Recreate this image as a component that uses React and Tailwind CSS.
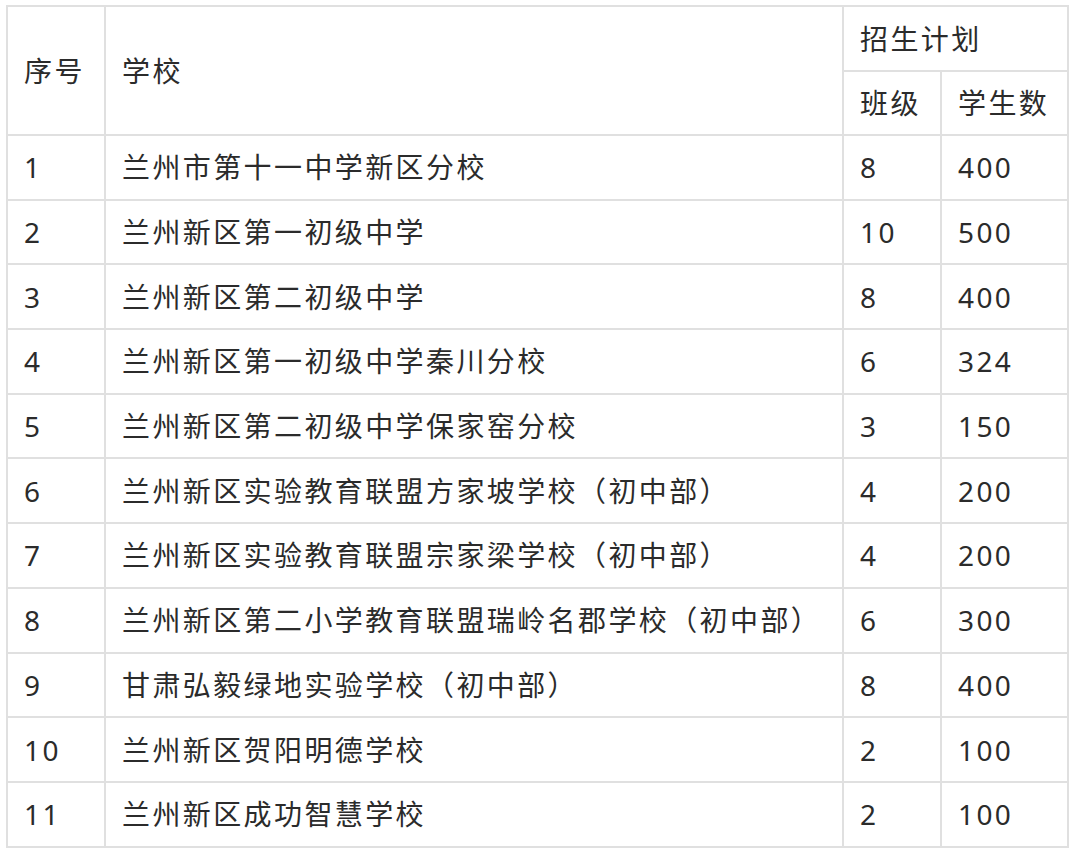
import React from "react";

const rows = [
  ["1", "兰州市第十一中学新区分校", "8", "400"],
  ["2", "兰州新区第一初级中学", "10", "500"],
  ["3", "兰州新区第二初级中学", "8", "400"],
  ["4", "兰州新区第一初级中学秦川分校", "6", "324"],
  ["5", "兰州新区第二初级中学保家窑分校", "3", "150"],
  ["6", "兰州新区实验教育联盟方家坡学校（初中部）", "4", "200"],
  ["7", "兰州新区实验教育联盟宗家梁学校（初中部）", "4", "200"],
  ["8", "兰州新区第二小学教育联盟瑞岭名郡学校（初中部）", "6", "300"],
  ["9", "甘肃弘毅绿地实验学校（初中部）", "8", "400"],
  ["10", "兰州新区贺阳明德学校", "2", "100"],
  ["11", "兰州新区成功智慧学校", "2", "100"],
];

const cell = "border-2 border-[#e0e0e0] pl-[16px] pr-2 text-left align-middle font-normal";

export default function App() {
  return (
    <div
      className="w-[1080px] h-[857px] bg-white pt-[5px] pl-[6px] text-[#2b2b2b] text-[28px] tracking-[2.4px]"
      style={{ fontFamily: '"Noto Sans", "Noto Sans CJK SC", sans-serif' }}
    >
      <table className="table-fixed border-collapse w-[1061px]">
        <colgroup>
          <col className="w-[98px]" />
          <col className="w-[738px]" />
          <col className="w-[98px]" />
          <col className="w-[127px]" />
        </colgroup>
        <thead>
          <tr className="h-[65px]">
            <th rowSpan={2} className={cell}>序号</th>
            <th rowSpan={2} className={cell}>学校</th>
            <th colSpan={2} className={cell}>招生计划</th>
          </tr>
          <tr className="h-[64px]">
            <th className={cell}>班级</th>
            <th className={cell}>学生数</th>
          </tr>
        </thead>
        <tbody>
          {rows.map((r) => (
            <tr key={r[0]} className="h-[64.7px]">
              {r.map((v, i) => (
                <td key={i} className={cell}>{v}</td>
              ))}
            </tr>
          ))}
        </tbody>
      </table>
    </div>
  );
}
